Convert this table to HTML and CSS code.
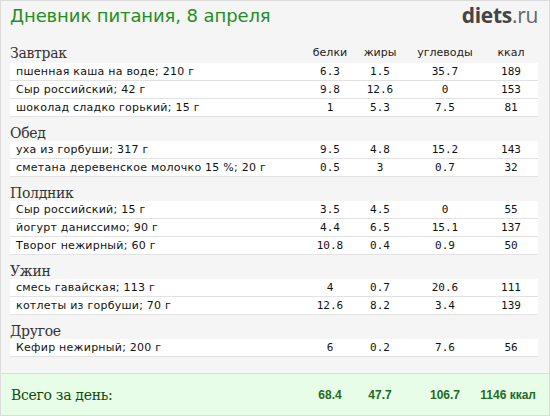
FILE: index.html
```html
<!DOCTYPE html>
<html>
<head>
<meta charset="utf-8">
<link rel="stylesheet" href="styles.css">
</head>
<body>
<div class="card">
  <div class="top">
    <div class="title">Дневник питания, 8 апреля</div>
    <div class="logo"><b>diets</b>.ru</div>
  </div>
  <div class="content">
    <div class="sec first">
      <div class="sec-name">Завтрак</div>
      <div class="hc">белки</div><div class="hc">жиры</div><div class="hc">углеводы</div><div class="hc">ккал</div>
    </div>
    <div class="row"><div class="name">пшенная каша на воде; 210 г</div><div>6.3</div><div>1.5</div><div>35.7</div><div>189</div></div>
    <div class="row"><div class="name">Сыр российский; 42 г</div><div>9.8</div><div>12.6</div><div>0</div><div>153</div></div>
    <div class="row"><div class="name">шоколад сладко горький; 15 г</div><div>1</div><div>5.3</div><div>7.5</div><div>81</div></div>

    <div class="sec"><div class="sec-name">Обед</div></div>
    <div class="row"><div class="name">уха из горбуши; 317 г</div><div>9.5</div><div>4.8</div><div>15.2</div><div>143</div></div>
    <div class="row"><div class="name">сметана деревенское молочко 15 %; 20 г</div><div>0.5</div><div>3</div><div>0.7</div><div>32</div></div>

    <div class="sec"><div class="sec-name">Полдник</div></div>
    <div class="row"><div class="name">Сыр российский; 15 г</div><div>3.5</div><div>4.5</div><div>0</div><div>55</div></div>
    <div class="row"><div class="name">йогурт даниссимо; 90 г</div><div>4.4</div><div>6.5</div><div>15.1</div><div>137</div></div>
    <div class="row"><div class="name">Творог нежирный; 60 г</div><div>10.8</div><div>0.4</div><div>0.9</div><div>50</div></div>

    <div class="sec"><div class="sec-name">Ужин</div></div>
    <div class="row"><div class="name">смесь гавайская; 113 г</div><div>4</div><div>0.7</div><div>20.6</div><div>111</div></div>
    <div class="row"><div class="name">котлеты из горбуши; 70 г</div><div>12.6</div><div>8.2</div><div>3.4</div><div>139</div></div>

    <div class="sec"><div class="sec-name">Другое</div></div>
    <div class="row"><div class="name">Кефир нежирный; 200 г</div><div>6</div><div>0.2</div><div>7.6</div><div>56</div></div>
  </div>
  <div class="total">
    <div class="total-name">Всего за день:</div>
    <div>68.4</div><div>47.7</div><div>106.7</div><div class="kcal">1146 ккал</div>
  </div>
</div>
</body>
</html>
```
FILE: styles.css
```css
html, body {
  margin: 0;
  padding: 0;
}
body {
  width: 550px;
  height: 416px;
  overflow: hidden;
}
.card {
  box-sizing: border-box;
  width: 550px;
  height: 416px;
  border: 1px solid #dcdcdc;
  background: #f5f5f5;
  display: flex;
  flex-direction: column;
}
.top {
  display: flex;
  justify-content: space-between;
  align-items: center;
  padding: 0 11px 2px 9px;
  height: 30px;
  box-sizing: border-box;
  flex: none;
}
.title {
  font-family: "DejaVu Sans", sans-serif;
  font-size: 18px;
  color: #1f8f1f;
  letter-spacing: -0.1px;
}
.logo {
  font-family: "Open Sans", "DejaVu Sans", sans-serif;
  font-size: 21px;
  color: #666;
  letter-spacing: -0.3px;
}
.logo b {
  color: #444;
  font-weight: 700;
}
.content {
  flex: 1;
  padding: 0 11px 0 9px;
  display: flex;
  flex-direction: column;
}
.sec, .row, .total {
  display: grid;
  grid-template-columns: 295px 50px 50px 80px 52px;
}
.sec {
  box-sizing: border-box;
  height: 24px;
  align-items: end;
  line-height: 16px;
  font-family: "DejaVu Sans", sans-serif;
  font-size: 11px;
  color: #222;
}
.sec.first {
  height: 32px;
  padding-bottom: 2px;
}
.sec-name {
  font-family: "DejaVu Serif", serif;
  font-size: 14px;
  color: #333;
  letter-spacing: -0.3px;
}
.hc {
  text-align: center;
}
.row {
  box-sizing: border-box;
  height: 18px;
  align-items: center;
  background: #fff;
  border-bottom: 1px solid #e2e2e2;
  font-family: "DejaVu Sans Mono", monospace;
  font-size: 11px;
  color: #111;
}
.row > div {
  text-align: center;
}
.row > .name {
  text-align: left;
  padding-left: 6px;
  font-family: "DejaVu Sans", sans-serif;
  letter-spacing: 0.25px;
}
.total {
  box-sizing: border-box;
  flex: none;
  height: 42px;
  align-items: center;
  background: #e8fde8;
  border-top: 1px solid #dcdcdc;
  padding: 0 11px 0 9px;
  font-family: "Liberation Sans", Arial, sans-serif;
  font-size: 12px;
  font-weight: bold;
  color: #1f6b1f;
}
.total > div {
  text-align: center;
  white-space: nowrap;
}
.total > .kcal {
  justify-self: end;
  padding-right: 1px;
}
.total > .total-name {
  text-align: left;
  font-family: "DejaVu Serif", serif;
  font-weight: normal;
  font-size: 14px;
  color: #0b4d0b;
  padding-left: 1px;
  letter-spacing: -0.3px;
}
```
